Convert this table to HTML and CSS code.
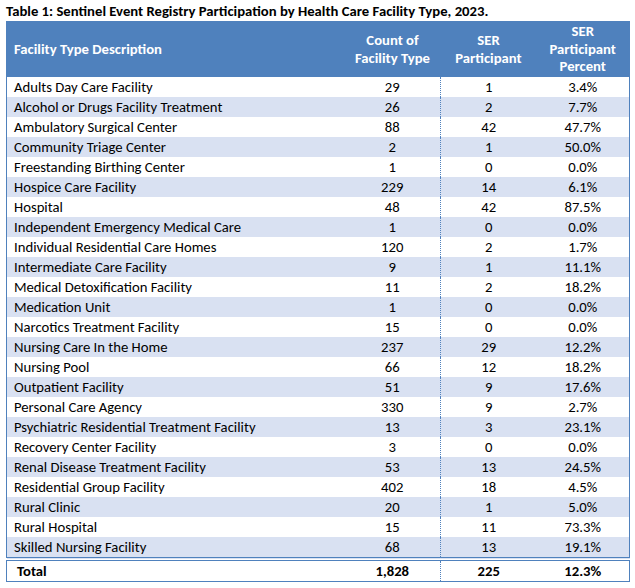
FILE: index.html
```html
<!DOCTYPE html>
<html>
<head>
<meta charset="utf-8">
<link rel="stylesheet" href="styles.css">
</head>
<body>
<div class="title">Table 1: Sentinel Event Registry Participation by Health Care Facility Type, 2023.</div>
<table class="tbl">
<colgroup><col class="c1"><col class="c2"><col class="c3"><col class="c4"></colgroup>
<thead>
<tr><th class="name">Facility Type Description</th><th>Count of<br>Facility Type</th><th>SER<br>Participant</th><th>SER<br>Participant<br>Percent</th></tr>
</thead>
<tbody>
<tr><td class="name">Adults Day Care Facility</td><td class="cnt">29</td><td>1</td><td>3.4%</td></tr>
<tr class="alt"><td class="name">Alcohol or Drugs Facility Treatment</td><td class="cnt">26</td><td>2</td><td>7.7%</td></tr>
<tr><td class="name">Ambulatory Surgical Center</td><td class="cnt">88</td><td>42</td><td>47.7%</td></tr>
<tr class="alt"><td class="name">Community Triage Center</td><td class="cnt">2</td><td>1</td><td>50.0%</td></tr>
<tr><td class="name">Freestanding Birthing Center</td><td class="cnt">1</td><td>0</td><td>0.0%</td></tr>
<tr class="alt"><td class="name">Hospice Care Facility</td><td class="cnt">229</td><td>14</td><td>6.1%</td></tr>
<tr><td class="name">Hospital</td><td class="cnt">48</td><td>42</td><td>87.5%</td></tr>
<tr class="alt"><td class="name">Independent Emergency Medical Care</td><td class="cnt">1</td><td>0</td><td>0.0%</td></tr>
<tr><td class="name">Individual Residential Care Homes</td><td class="cnt">120</td><td>2</td><td>1.7%</td></tr>
<tr class="alt"><td class="name">Intermediate Care Facility</td><td class="cnt">9</td><td>1</td><td>11.1%</td></tr>
<tr><td class="name">Medical Detoxification Facility</td><td class="cnt">11</td><td>2</td><td>18.2%</td></tr>
<tr class="alt"><td class="name">Medication Unit</td><td class="cnt">1</td><td>0</td><td>0.0%</td></tr>
<tr><td class="name">Narcotics Treatment Facility</td><td class="cnt">15</td><td>0</td><td>0.0%</td></tr>
<tr class="alt"><td class="name">Nursing Care In the Home</td><td class="cnt">237</td><td>29</td><td>12.2%</td></tr>
<tr><td class="name">Nursing Pool</td><td class="cnt">66</td><td>12</td><td>18.2%</td></tr>
<tr class="alt"><td class="name">Outpatient Facility</td><td class="cnt">51</td><td>9</td><td>17.6%</td></tr>
<tr><td class="name">Personal Care Agency</td><td class="cnt">330</td><td>9</td><td>2.7%</td></tr>
<tr class="alt"><td class="name">Psychiatric Residential Treatment Facility</td><td class="cnt">13</td><td>3</td><td>23.1%</td></tr>
<tr><td class="name">Recovery Center Facility</td><td class="cnt">3</td><td>0</td><td>0.0%</td></tr>
<tr class="alt"><td class="name">Renal Disease Treatment Facility</td><td class="cnt">53</td><td>13</td><td>24.5%</td></tr>
<tr><td class="name">Residential Group Facility</td><td class="cnt">402</td><td>18</td><td>4.5%</td></tr>
<tr class="alt"><td class="name">Rural Clinic</td><td class="cnt">20</td><td>1</td><td>5.0%</td></tr>
<tr><td class="name">Rural Hospital</td><td class="cnt">15</td><td>11</td><td>73.3%</td></tr>
<tr class="alt"><td class="name">Skilled Nursing Facility</td><td class="cnt">68</td><td>13</td><td>19.1%</td></tr>
<tr class="total"><td class="name">Total</td><td class="cnt">1,828</td><td>225</td><td>12.3%</td></tr>
</tbody>
</table>
</body>
</html>
```
FILE: styles.css
```css
html, body {
  margin: 0;
  padding: 0;
  background: #ffffff;
}
body {
  font-family: Carlito, Lato, "Liberation Sans", sans-serif;
  font-size: 14.7px;
  color: #000000;
}
.title {
  font-weight: bold;
  line-height: 20px;
  padding: 1px 0 0 6px;
  height: 20px;
}
.tbl {
  margin-left: 6px;
  border-collapse: collapse;
  table-layout: fixed;
  width: 623px;
  border: 1px solid #4f81bd;
}
.c1 { width: 338px; }
.c2 { width: 96px; }
.c3 { width: 96px; }
.c4 { width: 93px; }
.tbl th {
  background: #4f81bd;
  color: #ffffff;
  font-weight: bold;
  height: 55px;
  line-height: 17.5px;
  padding: 0;
  text-align: center;
  vertical-align: middle;
}
.tbl th.name {
  text-align: left;
  padding-left: 7px;
}
.tbl td {
  height: 20px;
  line-height: 20px;
  padding: 0;
  text-align: center;
  white-space: nowrap;
}
.tbl td.name {
  text-align: left;
  padding-left: 7px;
}
.tbl td.cnt {
  border-right: 1px dotted #4f81bd;
}
.tbl tr.alt td {
  background: #d9e1f2;
}
.tbl tr.total td {
  font-weight: bold;
  border-top: 4px double #4f81bd;
}
.tbl tr.total td.name {
  padding-left: 10px;
}
```
